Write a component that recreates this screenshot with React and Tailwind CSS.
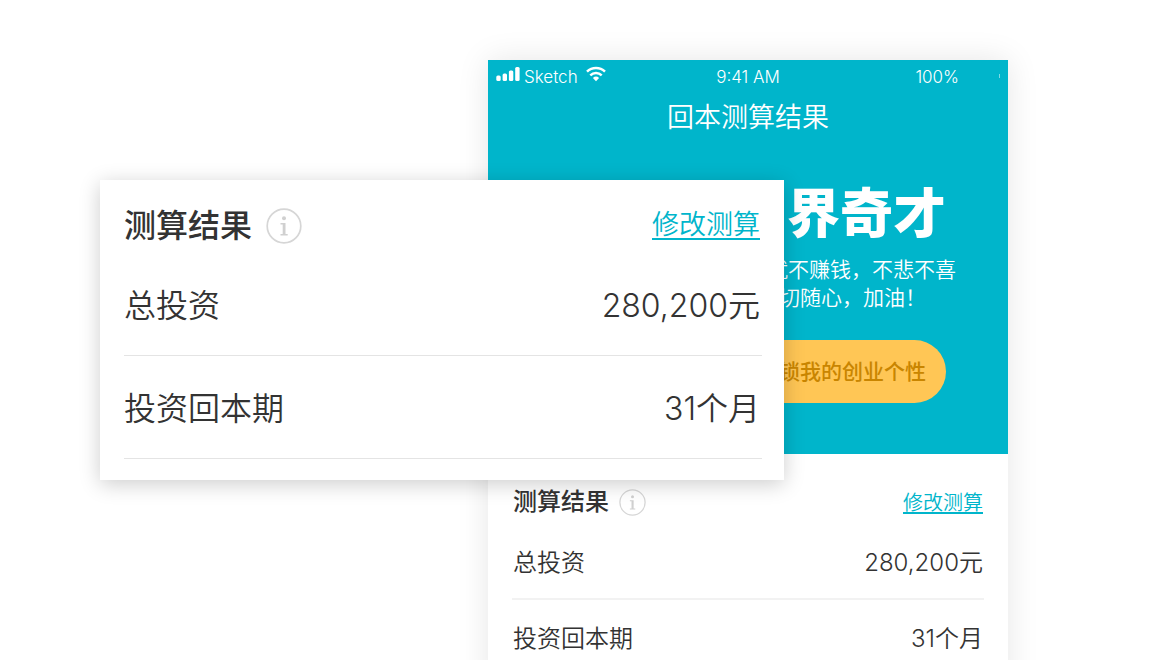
import React from 'react';

const rows = [
    { label: '总投资', value: '280,200元' },
    { label: '投资回本期', value: '31个月' },
];

const SignalIcon = () => (
    <svg className="w-6 h-4" viewBox="0 0 24 16" fill="currentColor">
        <rect x="0.300" y="9.500" width="4.400" height="5.500" rx="1.500" />
        <rect x="6.600" y="7.500" width="4.400" height="7.500" rx="1.500" />
        <rect x="12.900" y="4.500" width="4.400" height="10.500" rx="1.500" />
        <rect x="19.200" y="1" width="4.400" height="14" rx="1.500" />
    </svg>
);

const WifiIcon = () => (
    <svg className="w-5 h-4" viewBox="0 0 20 16" fill="none" stroke="currentColor" strokeWidth="2.5">
        <path d="M1 5.6a13 13 0 0 1 18 0" />
        <path d="M4.300 9.300a8.300 8.300 0 0 1 11.400 0" />
        <path d="M10 15.200L6.900 12a4.600 4.600 0 0 1 6.200 0z" fill="currentColor" stroke="none" />
    </svg>
);

const InfoIcon = ({ className }) => (
    <svg className={className} viewBox="0 0 36 36" fill="none">
        <circle cx="18" cy="18" r="16.800" stroke="#d6d6d6" strokeWidth="1.700" />
        <circle cx="18" cy="10.200" r="2" fill="#d0d0d0" />
        <path d="M14.500 15h5v11h2.200v1.400h-7.200v-1.400h2.200v-9.600h-2.200z" fill="#d0d0d0" />
    </svg>
);

const ZoomCard = () => (
    <section className="absolute top-[180px] left-[100px] right-[376px] bg-white pl-6 pr-[22px] pt-5 pb-[21px] shadow-[0_4px_20px_rgba(0,0,0,0.2)]">
        <div className="flex items-center justify-between h-[53px] pb-[2px] pr-[2px]">
            <div className="flex items-center gap-[14px]">
                <h2 className="text-[32px] font-medium">测算结果</h2>
                <button type="button" aria-label="说明">
                    <InfoIcon className="w-9 h-9" />
                </button>
            </div>
            <a href="#edit" className="text-[27px] font-[350] text-[#00b5cb] underline decoration-2 underline-offset-4 [text-decoration-skip-ink:none]">修改测算</a>
        </div>
        <dl>
            {rows.map((row) => (
                <div key={row.label} className="flex items-center justify-between h-[103px] pt-1 pr-[2px] border-b border-[#e4e4e4] text-[32px] font-[350]">
                    <dt>{row.label}</dt>
                    <dd>{row.value}</dd>
                </div>
            ))}
        </dl>
    </section>
);

const Phone = () => (
    <section className="ml-[388px] bg-white shadow-[0_0_30px_rgba(0,0,0,0.1)]">
        <header className="h-[394px] bg-[#00b5cb] text-white">
            <div className="grid grid-cols-3 items-center h-9 px-2 text-[17px] font-light">
                <div className="flex items-center gap-1">
                    <span className="pb-2"><SignalIcon /></span>
                    <span>Sketch</span>
                    <span className="ml-1 pb-2"><WifiIcon /></span>
                </div>
                <span className="text-center">9:41 AM</span>
                <div className="flex items-center justify-end gap-10">
                    <span>100%</span>
                    <span className="w-px h-1 mb-1 bg-white/50"></span>
                </div>
            </div>
            <h1 className="text-center text-[27px] leading-[44px] font-[350]">回本测算结果</h1>
            <div className="flex flex-col items-end pt-8 pr-[62px]">
                <p className="text-[53px] leading-[84px] font-black">界奇才</p>
                <p className="-mr-[10px] text-[21px] leading-7 font-[350]">就不赚钱，不悲不喜</p>
                <p className="pr-5 text-[21px] leading-7 font-[350]">一切随心，加油！</p>
                <button type="button" className="mt-7 h-[63px] px-5 rounded-full bg-[#ffc655] text-[21px] font-medium text-[#c98500]">
                    解锁我的创业个性
                </button>
            </div>
        </header>
        <div className="px-6 pt-6 pb-4">
            <div className="flex items-center justify-between h-[46px] pt-[2px] px-px">
                <div className="flex items-center gap-[10px]">
                    <h2 className="text-[24px] font-medium">测算结果</h2>
                    <button type="button" aria-label="说明">
                        <InfoIcon className="w-[27px] h-[27px]" />
                    </button>
                </div>
                <a href="#edit" className="pt-[2px] text-[20px] font-[350] text-[#00b5cb] underline decoration-2 underline-offset-2 [text-decoration-skip-ink:none]">修改测算</a>
            </div>
            <dl>
                {rows.map((row) => (
                    <div key={row.label} className="flex items-center justify-between h-[76px] pt-[3px] px-px border-b-2 border-[#f2f2f2] text-[24px] font-[350]">
                        <dt>{row.label}</dt>
                        <dd>{row.value}</dd>
                    </div>
                ))}
            </dl>
        </div>
    </section>
);

export default function App() {
    return (
        <main className="relative h-screen overflow-hidden bg-white pt-[60px] pl-[100px] pr-[152px] text-[#333] font-['Inter','Noto_Sans_CJK_SC',sans-serif]">
            <Phone />
            <ZoomCard />
        </main>
    );
}
